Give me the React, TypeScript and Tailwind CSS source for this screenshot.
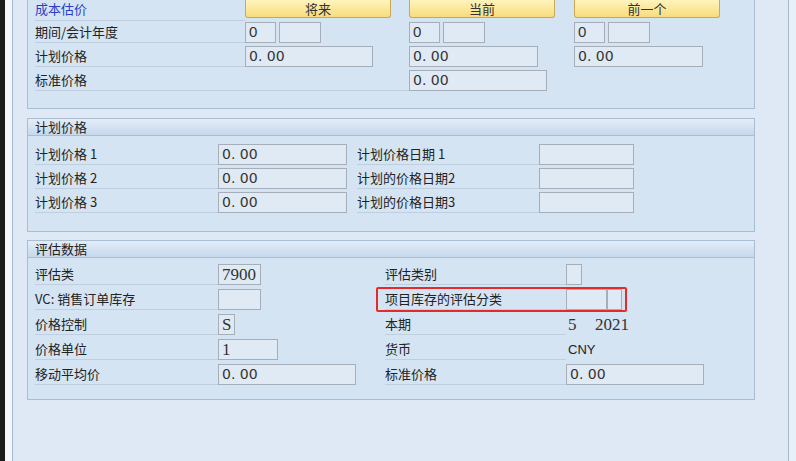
import type { ReactNode } from 'react';

const cjk = "font-['Noto_Sans_CJK_SC','Noto_Sans',sans-serif]";
const serif = "font-['Liberation_Serif','Noto_Sans_CJK_SC',serif]";
const num = "font-['DejaVu_Sans','Noto_Sans_CJK_SC',sans-serif]";

function Label({ w, children, blue }: { w: string; children?: ReactNode; blue?: boolean }) {
  return (
    <div
      className={`${w} h-[21px] shrink-0 flex items-center border-b border-[#bfcfe0] text-[13px] ${
        blue ? 'text-[#2b3ccc]' : 'text-[#222]'
      }`}
    >
      {children}
    </div>
  );
}

function Field({ w, children, font = num }: { w: string; children?: ReactNode; font?: string }) {
  return (
    <div
      className={`${w} h-[21px] shrink-0 flex items-center px-[3px] border border-[#a6afb9] bg-[#e0eaf5] text-[14px] text-[#333] ${font}`}
    >
      {children}
    </div>
  );
}

function YellowButton({ children }: { children: ReactNode }) {
  return (
    <div className="w-[146px] h-[18px] flex items-center justify-center rounded-b-[3px] border border-t-0 border-[#c9a957] bg-gradient-to-b from-[#fff4bd] to-[#f8dc7b] text-[13px] text-[#333]">
      {children}
    </div>
  );
}

function GroupHeader({ title }: { title: string }) {
  return (
    <div className="h-[17px] flex items-center pl-[7px] border-b border-[#a9bdd3] bg-gradient-to-b from-[#e3edf8] to-[#c6d8ec] text-[13px] text-[#222]">
      {title}
    </div>
  );
}

export default function App() {
  return (
    <div className={`h-screen w-full overflow-hidden flex bg-[#dfe9f5] ${cjk}`}>
      <div className="w-[5px] shrink-0 bg-[#1a1a1a]" />
      <div className="w-[7px] shrink-0 bg-[#f3f6fa]" />
      <div className="w-[777px] shrink-0 border-l border-r border-[#a7b9cd] bg-[#dee9f5] pl-[14px]">
        {/* 成本估价 */}
        <div className="w-[728px] border-l border-r border-b border-[#a9bdd3] bg-[#d5e4f3] pl-[7px] pb-[16px]">
          <div className="flex h-[20px] items-start">
            <Label w="w-[210px]" blue>
              <span className="leading-[14px] -mt-[3px]">成本估价</span>
            </Label>
            <div className="w-[164px] shrink-0">
              <YellowButton>将来</YellowButton>
            </div>
            <div className="w-[165px] shrink-0">
              <YellowButton>当前</YellowButton>
            </div>
            <YellowButton>前一个</YellowButton>
          </div>
          <div className="flex h-6 items-center">
            <Label w="w-[210px]">期间/会计年度</Label>
            {[0, 1, 2].map((i) => (
              <div key={i} className={`${i === 1 ? 'w-[165px]' : 'w-[164px]'} shrink-0 flex gap-[3px]`}>
                <Field w="w-[31px]">
                  <span className="font-['Liberation_Sans',sans-serif] text-[15px]">0</span>
                </Field>
                <Field w="w-[42px]" />
              </div>
            ))}
          </div>
          <div className="flex h-6 items-center">
            <Label w="w-[210px]">计划价格</Label>
            <div className="w-[164px] shrink-0">
              <Field w="w-[128px]">0. 00</Field>
            </div>
            <div className="w-[165px] shrink-0">
              <Field w="w-[129px]">0. 00</Field>
            </div>
            <Field w="w-[129px]">0. 00</Field>
          </div>
          <div className="flex h-6 items-center">
            <Label w="w-[374px]">标准价格</Label>
            <Field w="w-[138px]">0. 00</Field>
          </div>
        </div>

        {/* 计划价格 */}
        <div className="mt-[9px] w-[728px] border border-[#a9bdd3] bg-[#d5e4f3]">
          <GroupHeader title="计划价格" />
          <div className="pl-[7px] pt-[6px] pb-[17px]">
            {[
              ['计划价格 1', '计划价格日期 1'],
              ['计划价格 2', '计划的价格日期2'],
              ['计划价格 3', '计划的价格日期3'],
            ].map(([l, r]) => (
              <div key={l} className="flex h-6 items-center">
                <Label w="w-[183px]">{l}</Label>
                <div className="w-[139px] shrink-0">
                  <Field w="w-[129px]">0. 00</Field>
                </div>
                <Label w="w-[182px]">{r}</Label>
                <Field w="w-[95px]" />
              </div>
            ))}
          </div>
        </div>

        {/* 评估数据 */}
        <div className="mt-[8px] w-[728px] border border-[#a9bdd3] bg-[#d5e4f3]">
          <GroupHeader title="评估数据" />
          <div className="pl-[7px] pt-[4px] pb-[12px]">
            <div className="flex h-[25px] items-center">
              <Label w="w-[183px]">评估类</Label>
              <div className="w-[167px] shrink-0">
                <Field w="w-[43px]" font={serif}>
                  <span className="text-[17px]">7900</span>
                </Field>
              </div>
              <Label w="w-[181px]">评估类别</Label>
              <Field w="w-[16px]" />
            </div>
            <div className="relative flex h-[25px] items-center">
              <Label w="w-[183px]">VC: 销售订单库存</Label>
              <div className="w-[167px] shrink-0">
                <Field w="w-[43px]" />
              </div>
              <Label w="w-[181px]">项目库存的评估分类</Label>
              <Field w="w-[41px]" />
              <Field w="w-[15px]" />
              <div className="absolute left-[341px] top-0 w-[251px] h-[25px] rounded-[2px] border-2 border-[#e42a2a]" />
            </div>
            <div className="flex h-[25px] items-center">
              <Label w="w-[183px]">价格控制</Label>
              <div className="w-[167px] shrink-0">
                <Field w="w-[17px]" font={serif}>
                  <span className="text-[17px]">S</span>
                </Field>
              </div>
              <Label w="w-[181px]">本期</Label>
              <div className={`flex items-center pl-[2px] text-[17px] text-[#333] ${serif}`}>
                <span className="w-[27px]">5</span>
                <span>2021</span>
              </div>
            </div>
            <div className="flex h-[25px] items-center">
              <Label w="w-[183px]">价格单位</Label>
              <div className="w-[167px] shrink-0">
                <Field w="w-[60px]" font={serif}>
                  <span className="text-[17px]">1</span>
                </Field>
              </div>
              <Label w="w-[181px]">货币</Label>
              <div className="pl-[2px] text-[13px] text-[#222] font-['Liberation_Sans',sans-serif]">CNY</div>
            </div>
            <div className="flex h-[25px] items-center">
              <Label w="w-[183px]">移动平均价</Label>
              <div className="w-[167px] shrink-0">
                <Field w="w-[138px]">0. 00</Field>
              </div>
              <Label w="w-[181px]">标准价格</Label>
              <Field w="w-[138px]">0. 00</Field>
            </div>
          </div>
        </div>
      </div>
      <div className="flex-1 bg-[#e7eff8]" />
    </div>
  );
}
